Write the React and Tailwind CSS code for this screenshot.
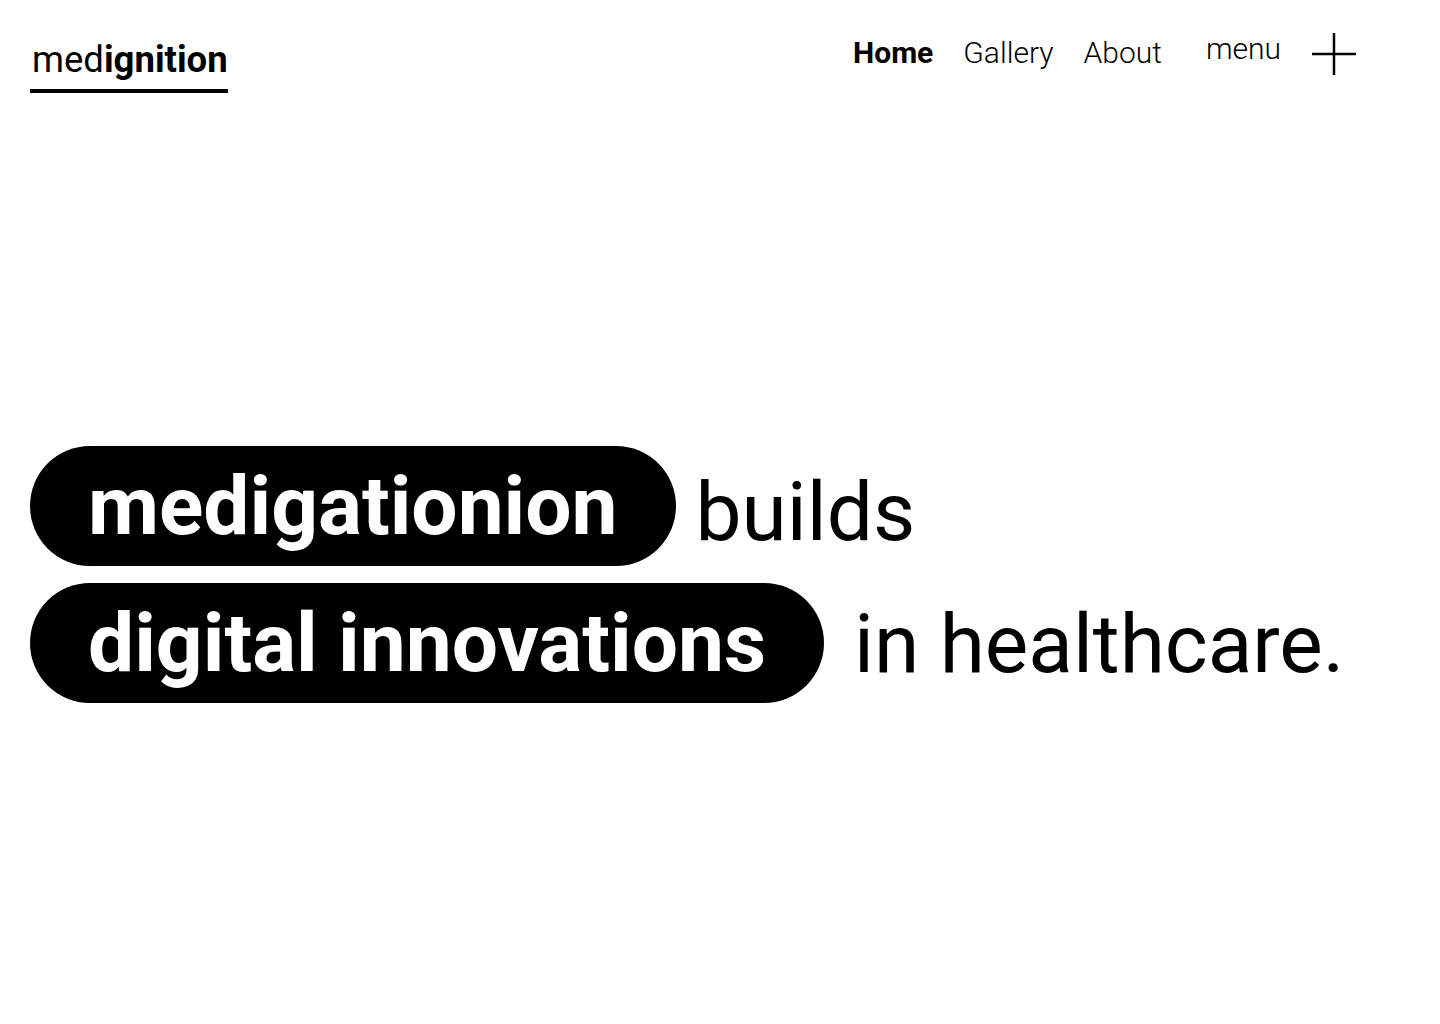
import React from "react";

function PlusIcon() {
  return (
    <svg width="44" height="42" viewBox="0 0 44 42" fill="none" stroke="#000" strokeWidth="2.5">
      <line x1="0" y1="21" x2="44" y2="21" />
      <line x1="22" y1="0" x2="22" y2="42" />
    </svg>
  );
}

function Header() {
  return (
    <header className="flex h-[92px] items-start justify-between pl-[30px] pr-[84px] pt-[38px]">
      {/* logo with underline */}
      <a href="#" className="mt-[4px] block border-b-4 border-black pb-[10px] pl-[2px] text-[36.5px] leading-none text-black">
        med<span className="font-bold">ignition</span>
      </a>

      <nav className="flex items-start text-[30px] leading-none text-black">
        <a href="#" className="font-bold">Home</a>
        <a href="#" className="ml-[30px] font-light">Gallery</a>
        <a href="#" className="ml-[30px] font-light">About</a>
        <button className="ml-[44px] -mt-[4px] font-light">menu</button>
        <button className="ml-[31px] -mt-[5px]" aria-label="open menu">
          <PlusIcon />
        </button>
      </nav>
    </header>
  );
}

function Pill({ children }) {
  return (
    <span className="inline-block rounded-full bg-black px-[58px] text-[82px] font-bold leading-[120px] text-white">
      {children}
    </span>
  );
}

export default function App() {
  return (
    <div className="min-h-screen bg-white font-['Roboto',sans-serif] text-black">
      <Header />

      <main className="mt-[354px] flex flex-col gap-[17px] px-[30px]">
        <div className="flex items-center">
          <Pill>medigationion</Pill>
          <span className="ml-[20px] mt-[12px] text-[82px] leading-none">builds</span>
        </div>
        <div className="flex items-center">
          <Pill>digital innovations</Pill>
          <span className="ml-[30px] mt-[2px] text-[82px] leading-none">in healthcare.</span>
        </div>
      </main>
    </div>
  );
}
